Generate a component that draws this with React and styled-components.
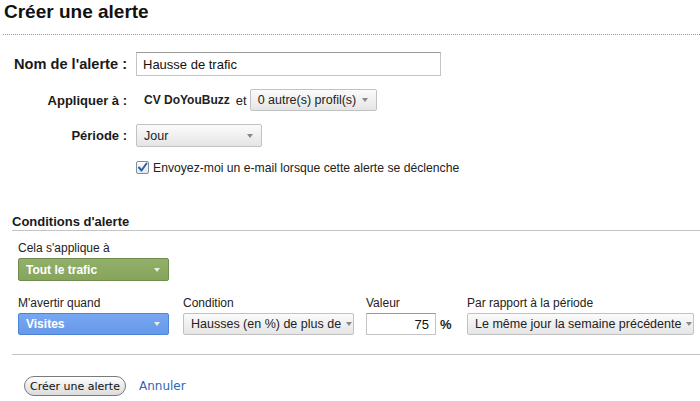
import React from 'react'
import styled, { createGlobalStyle } from 'styled-components'

const GlobalStyle = createGlobalStyle`
  body {
    margin: 0;
    background: #fff;
    font-family: "Liberation Sans", Arial, sans-serif;
    color: #222;
  }
`

const Page = styled.div`
  width: 700px;
  height: 401px;
  overflow: hidden;
`

const Title = styled.h1`
  margin: 0 0 0 3px;
  padding-left: 1px;
  height: 34px;
  font-size: 19px;
  line-height: 24px;
  font-weight: bold;
  color: #111;
  border-bottom: 1px dotted #999;
`

const Form = styled.div`
  display: grid;
  grid-template-columns: 114px 1fr;
  column-gap: 9px;
  row-gap: 13px;
  align-items: center;
  padding: 17px 0 0 13px;
`

const Label = styled.div`
  text-align: right;
  font-weight: bold;
  font-size: ${p => p.$big ? '14.6px' : '13px'};
  color: #1a1a1a;
  white-space: nowrap;
`

const TextInput = styled.div`
  box-sizing: border-box;
  width: ${p => p.$w}px;
  height: ${p => p.$h || 24}px;
  border: 1px solid #c4c4c4;
  border-top-color: #9a9a9a;
  background: #fff;
  font-size: 13px;
  display: flex;
  align-items: center;
  justify-content: ${p => p.$right ? 'flex-end' : 'flex-start'};
  padding: 0 6px;
  color: #111;
`

const Inline = styled.div`
  display: flex;
  align-items: center;
  padding-left: ${p => p.$pad || 0}px;
  font-size: 13px;
`

const Strong = styled.span`
  font-weight: bold;
  font-size: 12px;
  margin-right: 6px;
`

const Select = styled.div`
  box-sizing: border-box;
  width: ${p => p.$w}px;
  height: ${p => p.$h || 23}px;
  margin-left: ${p => p.$gap || 0}px;
  display: flex;
  align-items: center;
  justify-content: space-between;
  padding: 0 8px 0 7px;
  border-radius: 2px;
  font-size: ${p => p.$tone ? '12px' : '12.5px'};
  font-weight: ${p => p.$tone ? 'bold' : 'normal'};
  white-space: nowrap;
  overflow: hidden;
  color: ${p => p.$tone ? '#fff' : '#222'};
  border: 1px solid ${p => p.$tone === 'green' ? '#6f8d4c' : p.$tone === 'blue' ? '#4c84d8' : '#c2c2c2'};
  background: ${p => p.$tone === 'green'
    ? 'linear-gradient(#93b06a, #86a45c)'
    : p.$tone === 'blue'
      ? 'linear-gradient(#78a8f2, #6798ea)'
      : 'linear-gradient(#fbfbfb, #e5e5e5)'};
`

const Arrow = styled.span`
  flex-shrink: 0;
  width: 0;
  height: 0;
  margin-left: 5px;
  border-left: 3.5px solid transparent;
  border-right: 3.5px solid transparent;
  border-top: 4px solid ${p => p.$light ? '#e8f0e0' : '#888'};
`

const CheckRow = styled.div`
  display: flex;
  align-items: center;
  gap: 4px;
  font-size: 12.2px;
  height: 15px;
`

const Section = styled.div`
  margin: 39px 0 0 12px;
`

const SectionHead = styled.div`
  font-weight: bold;
  font-size: 13px;
  line-height: 16px;
  color: #1a1a1a;
  border-bottom: 1px solid #c4c4c4;
`

const Conditions = styled.div`
  padding: 10px 0 19px 6px;
  display: flex;
  flex-direction: column;
  gap: 15px;
  border-bottom: 1px solid #c4c4c4;
`

const FieldRow = styled.div`
  display: grid;
  grid-template-columns: 165px 183px 101px 227px;
`

const Field = styled.div`
  display: flex;
  flex-direction: column;
  gap: 3px;
`

const FieldLabel = styled.div`
  font-size: 12px;
  line-height: 14px;
  color: #222;
  white-space: nowrap;
`

const Percent = styled.span`
  font-weight: bold;
  font-size: 13px;
  margin-left: 4px;
`

const Actions = styled.div`
  display: flex;
  align-items: center;
  gap: 13px;
  padding: 21px 0 0 24px;
`

const PillButton = styled.button`
  box-sizing: border-box;
  width: 102px;
  height: 20px;
  padding: 0;
  border: 1px solid #7a7a7a;
  border-radius: 10px;
  background: linear-gradient(#ffffff, #e9e9e9 55%, #dcdcdc);
  font-family: "DejaVu Sans", sans-serif;
  font-size: 11px;
  color: #111;
`

const Link = styled.a`
  font-family: "DejaVu Sans", sans-serif;
  font-size: 12px;
  color: #2d68b3;
  text-decoration: none;
`

const CheckBox = () => (
  <svg width="13" height="13" viewBox="0 0 13 13">
    <defs>
      <linearGradient id="cb" x1="0" y1="0" x2="0" y2="1">
        <stop offset="0" stopColor="#ffffff" />
        <stop offset="1" stopColor="#dfe6ef" />
      </linearGradient>
    </defs>
    <rect x="0.5" y="0.5" width="12" height="12" rx="1.5" fill="url(#cb)" stroke="#7f8c9c" />
    <path d="M3 6.5 L5.5 9.5 L10.5 2.5" fill="none" stroke="#2f5fa8" strokeWidth="2" strokeLinecap="round" strokeLinejoin="round" />
  </svg>
)

export default function App() {
  return (
    <Page>
      <GlobalStyle />
      <Title>Créer une alerte</Title>
      <Form>
        <Label $big>Nom de l'alerte :</Label>
        <TextInput $w={305}>Hausse de trafic</TextInput>

        <Label>Appliquer à :</Label>
        <Inline $pad={8}>
          <Strong>CV DoYouBuzz</Strong>
          <span>et</span>
          <Select $w={127} $h={22} $gap={3}>
            0 autre(s) profil(s)<Arrow />
          </Select>
        </Inline>

        <Label>Période :</Label>
        <Select $w={126}>Jour<Arrow /></Select>

        <span />
        <CheckRow>
          <CheckBox />
          Envoyez-moi un e-mail lorsque cette alerte se déclenche
        </CheckRow>
      </Form>

      <Section>
        <SectionHead>Conditions d'alerte</SectionHead>
        <Conditions>
          <Field>
            <FieldLabel>Cela s'applique à</FieldLabel>
            <Select $w={151} $tone="green">Tout le trafic<Arrow $light /></Select>
          </Field>
          <FieldRow>
            <Field>
              <FieldLabel>M'avertir quand</FieldLabel>
              <Select $w={151} $h={22} $tone="blue">Visites<Arrow $light /></Select>
            </Field>
            <Field>
              <FieldLabel>Condition</FieldLabel>
              <Select $w={171} $h={22}>Hausses (en %) de plus de<Arrow /></Select>
            </Field>
            <Field>
              <FieldLabel>Valeur</FieldLabel>
              <Inline>
                <TextInput $w={70} $h={22} $right>75</TextInput>
                <Percent>%</Percent>
              </Inline>
            </Field>
            <Field>
              <FieldLabel>Par rapport à la période</FieldLabel>
              <Select $w={227} $h={22}>Le même jour la semaine précédente<Arrow /></Select>
            </Field>
          </FieldRow>
        </Conditions>
      </Section>

      <Actions>
        <PillButton>Créer une alerte</PillButton>
        <Link href="#">Annuler</Link>
      </Actions>
    </Page>
  )
}
